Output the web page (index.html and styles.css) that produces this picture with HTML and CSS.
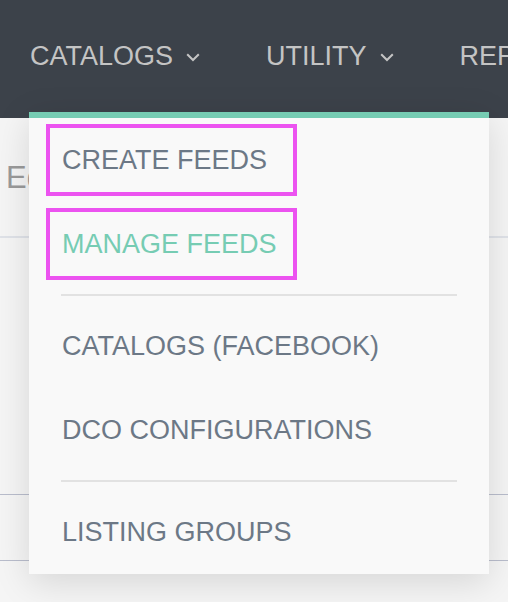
FILE: index.html
```html
<!DOCTYPE html>
<html lang="en">
<head>
<meta charset="utf-8">
<title>Catalogs menu</title>
<link rel="stylesheet" href="styles.css">
</head>
<body>
<header class="topbar">
  <nav class="nav">
    <div class="nav-item open">
      <span class="nav-label">CATALOGS</span>
      <svg class="chev" width="14" height="9" viewBox="0 0 14 9"><path d="M1.2 1.2 L7 7 L12.8 1.2" fill="none" stroke="currentColor" stroke-width="2"/></svg>
      <div class="dropdown">
        <a class="dd-item marked">CREATE FEEDS</a>
        <a class="dd-item marked active">MANAGE FEEDS</a>
        <div class="dd-sep"></div>
        <a class="dd-item">CATALOGS (FACEBOOK)</a>
        <a class="dd-item">DCO CONFIGURATIONS</a>
        <div class="dd-sep"></div>
        <a class="dd-item">LISTING GROUPS</a>
      </div>
    </div>
    <div class="nav-item">
      <span class="nav-label">UTILITY</span>
      <svg class="chev" width="14" height="9" viewBox="0 0 14 9"><path d="M1.2 1.2 L7 7 L12.8 1.2" fill="none" stroke="currentColor" stroke-width="2"/></svg>
    </div>
    <div class="nav-item">
      <span class="nav-label">REPORTS</span>
    </div>
  </nav>
</header>
<main class="content">
  <section class="page-head">
    <h1 class="page-title">Edit Feed</h1>
  </section>
  <div class="row row-tall"></div>
  <div class="row row-short"></div>
</main>
</body>
</html>
```

FILE: styles.css
```css
*, *::before, *::after { box-sizing: border-box; }

html, body {
  margin: 0;
  padding: 0;
}

body {
  width: 508px;
  height: 602px;
  overflow: hidden;
  background: #f5f5f5;
  font-family: "Liberation Sans", Arial, Helvetica, sans-serif;
}

.topbar {
  height: 118px;
  background: #3c424a;
  padding: 0 0 6px 30px;
  position: relative;
  z-index: 5;
}

.nav {
  display: flex;
  height: 100%;
  gap: 66px;
  white-space: nowrap;
}

.nav-item {
  position: relative;
  display: flex;
  align-items: center;
  color: #c4c4c4;
  font-size: 27px;
  line-height: 30px;
}

.chev {
  margin-left: 13px;
  margin-top: 2px;
  color: #c4c4c4;
}

.dropdown {
  position: absolute;
  left: -1px;
  top: 100%;
  width: 460px;
  background: #f9f9f9;
  border-top: 6px solid #76ccb3;
  box-shadow: 0 8px 34px rgba(0, 0, 0, 0.13);
  display: flex;
  flex-direction: column;
}

.dd-item {
  height: 84px;
  display: flex;
  align-items: center;
  padding-left: 33px;
  color: #6c7886;
  font-size: 27px;
  line-height: 30px;
  text-decoration: none;
  position: relative;
}

.dd-item.marked::before {
  content: "";
  position: absolute;
  left: 17px;
  top: 6px;
  width: 251px;
  height: 72px;
  border: 4px solid #ec53f0;
}

.dd-item.active {
  color: #76ccb3;
}

.dd-sep {
  height: 2px;
  margin: 8px 32px;
  background: #e2e2e2;
}

.page-head {
  height: 120px;
  padding: 42px 0 0 6px;
  border-bottom: 2px solid #dfe2e8;
}

.page-title {
  margin: 0;
  font-weight: normal;
  font-size: 31px;
  line-height: 36px;
  color: #9a9a9a;
}

.row {
  border-bottom: 1px solid #b9bdcc;
}

.row-tall { height: 257px; }
.row-short { height: 66px; }
```
